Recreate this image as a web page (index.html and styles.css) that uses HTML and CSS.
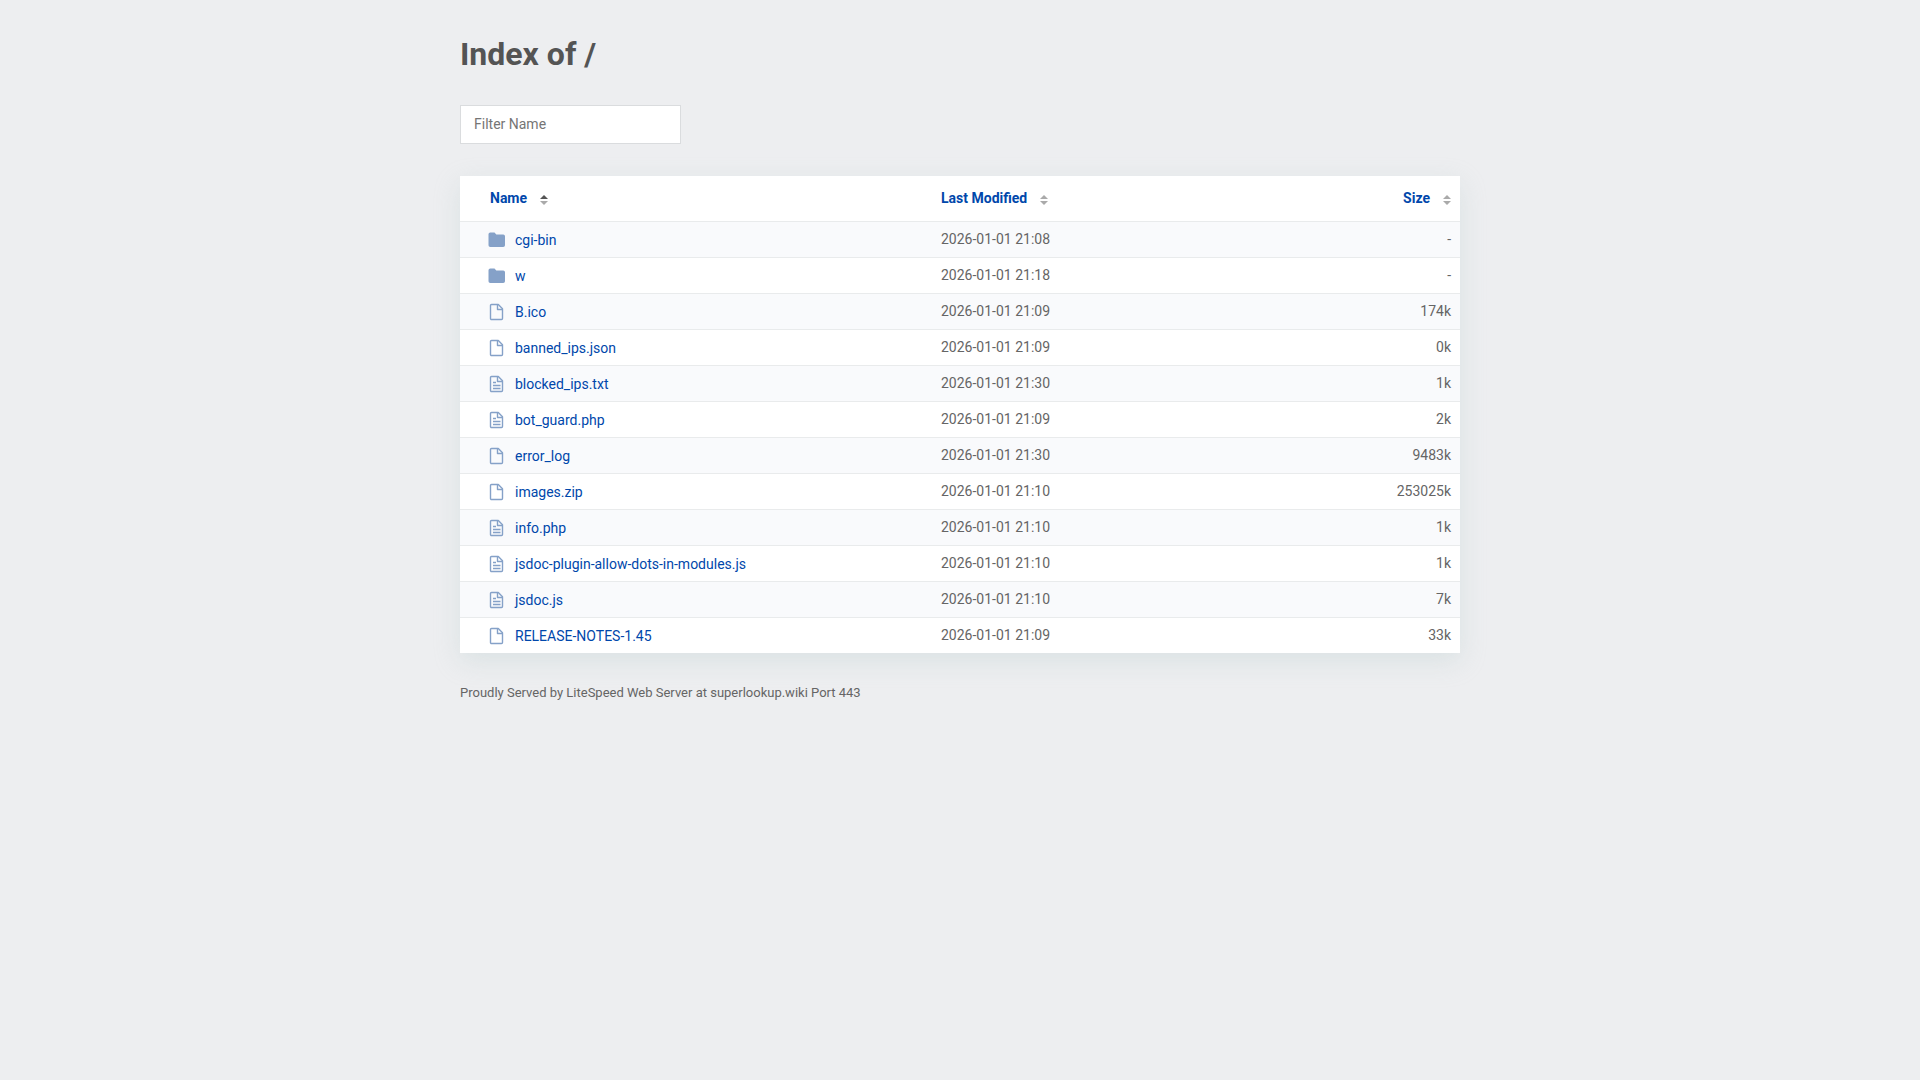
FILE: index.html
```html
<!DOCTYPE html>
<html lang="en">
<head>
<meta charset="utf-8">
<meta name="viewport" content="width=device-width, initial-scale=1">
<title>Index of /</title>
<link rel="stylesheet" href="styles.css">
</head>
<body>
<svg class="sprite" aria-hidden="true">
  <symbol id="folder" viewBox="0 0 18 18"><path d="M2.300 1.500h4.200l1.800 2h6.900a1.800 1.800 0 0 1 1.800 1.800v8.900a1.800 1.800 0 0 1-1.800 1.800H2.300A1.800 1.800 0 0 1 .5 14.200V3.300a1.800 1.800 0 0 1 1.800-1.800z" fill="#85a1c8"/></symbol>
  <symbol id="file" viewBox="0 0 18 18"><g fill="none" stroke="#85a1c8" stroke-width="1.4" stroke-linejoin="round"><path d="M3.500 1.500h6.800L14.500 5.700v9.800a1 1 0 0 1-1 1h-10a1 1 0 0 1-1-1v-13a1 1 0 0 1 1-1z"/><path d="M9.500 1.500V6.500h5"/></g></symbol>
  <symbol id="text" viewBox="0 0 18 18"><use href="#file"/><path d="M5 7.500h3M5 10.500h7.500M5 13.500h7.500" fill="none" stroke="#85a1c8" stroke-width="1.300"/></symbol>
</svg>
<main class="content">
  <h1 class="title">Index of /</h1>
  <input class="filter" type="text" placeholder="Filter Name" aria-label="Filter Name">
  <table class="listing">
    <thead>
      <tr>
        <th class="name" aria-sort="ascending"><button type="button">Name<svg class="sort ascending" viewBox="0 0 8 10"><path class="up" d="M0 4L4 0l4 4z"/><path class="down" d="M0 6h8l-4 4z"/></svg></button></th>
        <th class="date"><button type="button">Last Modified<svg class="sort" viewBox="0 0 8 10"><path d="M0 4L4 0l4 4zM0 6h8l-4 4z"/></svg></button></th>
        <th class="size"><button type="button">Size<svg class="sort" viewBox="0 0 8 10"><path d="M0 4L4 0l4 4zM0 6h8l-4 4z"/></svg></button></th>
      </tr>
    </thead>
    <tbody>
      <tr><td class="name"><a href="#"><svg class="icon"><use href="#folder"/></svg>cgi-bin</a></td><td>2026-01-01 21:08</td><td class="size">-</td></tr>
      <tr><td class="name"><a href="#"><svg class="icon"><use href="#folder"/></svg>w</a></td><td>2026-01-01 21:18</td><td class="size">-</td></tr>
      <tr><td class="name"><a href="#"><svg class="icon"><use href="#file"/></svg>B.ico</a></td><td>2026-01-01 21:09</td><td class="size">174k</td></tr>
      <tr><td class="name"><a href="#"><svg class="icon"><use href="#file"/></svg>banned_ips.json</a></td><td>2026-01-01 21:09</td><td class="size">0k</td></tr>
      <tr><td class="name"><a href="#"><svg class="icon"><use href="#text"/></svg>blocked_ips.txt</a></td><td>2026-01-01 21:30</td><td class="size">1k</td></tr>
      <tr><td class="name"><a href="#"><svg class="icon"><use href="#text"/></svg>bot_guard.php</a></td><td>2026-01-01 21:09</td><td class="size">2k</td></tr>
      <tr><td class="name"><a href="#"><svg class="icon"><use href="#file"/></svg>error_log</a></td><td>2026-01-01 21:30</td><td class="size">9483k</td></tr>
      <tr><td class="name"><a href="#"><svg class="icon"><use href="#file"/></svg>images.zip</a></td><td>2026-01-01 21:10</td><td class="size">253025k</td></tr>
      <tr><td class="name"><a href="#"><svg class="icon"><use href="#text"/></svg>info.php</a></td><td>2026-01-01 21:10</td><td class="size">1k</td></tr>
      <tr><td class="name"><a href="#"><svg class="icon"><use href="#text"/></svg>jsdoc-plugin-allow-dots-in-modules.js</a></td><td>2026-01-01 21:10</td><td class="size">1k</td></tr>
      <tr><td class="name"><a href="#"><svg class="icon"><use href="#text"/></svg>jsdoc.js</a></td><td>2026-01-01 21:10</td><td class="size">7k</td></tr>
      <tr><td class="name"><a href="#"><svg class="icon"><use href="#file"/></svg>RELEASE-NOTES-1.45</a></td><td>2026-01-01 21:09</td><td class="size">33k</td></tr>
    </tbody>
  </table>
  <footer class="footer">Proudly Served by LiteSpeed Web Server at superlookup.wiki Port 443</footer>
</main>
</body>
</html>
```
FILE: styles.css
```css
* {
  box-sizing: border-box;
}

body {
  margin: 0;
  background: #edeef0;
  color: #656565;
  font: 14px/20px Roboto, sans-serif;
}

.sprite {
  display: none;
}

.content {
  max-width: 1040px;
  margin: 0 auto;
  padding: 32px 20px;
}

.title {
  margin: 0 0 29px;
  color: #545454;
  font-size: 32px;
  line-height: 44px;
}

.filter {
  display: block;
  width: 221px;
  height: 39px;
  margin: 0 0 32px;
  padding: 0 13px 2px;
  border: 1px solid #dadcde;
  background: #fff;
  color: #656565;
  font: inherit;
}

.filter::placeholder {
  color: #757575;
}

.listing {
  width: 100%;
  border-spacing: 0;
  table-layout: fixed;
  background: #fff;
  box-shadow: 0 8px 24px 0 rgba(176, 198, 198, 0.3);
}

.listing th,
.listing td {
  padding: 7px 9px 8px;
  border-bottom: 1px solid #e9ebec;
  text-align: left;
}

.listing th {
  padding: 12px 9px 13px;
}

.listing tbody tr:nth-child(odd) {
  background: #f9fafc;
}

.listing tbody tr:last-child td {
  border-bottom: 0;
}

.listing td.name {
  padding: 8px 9px 7px 28px;
}

.listing th.name {
  width: 472px;
  padding-left: 30px;
}

.listing .size {
  text-align: right;
}

.listing button {
  display: inline-flex;
  align-items: center;
  gap: 13px;
  padding: 0;
  border: 0;
  background: none;
  color: #0047ab;
  font: inherit;
  font-weight: 700;
  cursor: pointer;
}

.sort {
  width: 8px;
  height: 10px;
  margin-top: 3px;
  fill: #aaa;
}

.ascending .up {
  fill: #555;
}

.listing a {
  display: flex;
  align-items: center;
  gap: 9px;
  color: #0047ab;
  text-decoration: none;
}

.listing a:hover {
  text-decoration: underline;
}

.icon {
  width: 18px;
  height: 18px;
}

.footer {
  padding-top: 30px;
  font-size: 13px;
}
```
